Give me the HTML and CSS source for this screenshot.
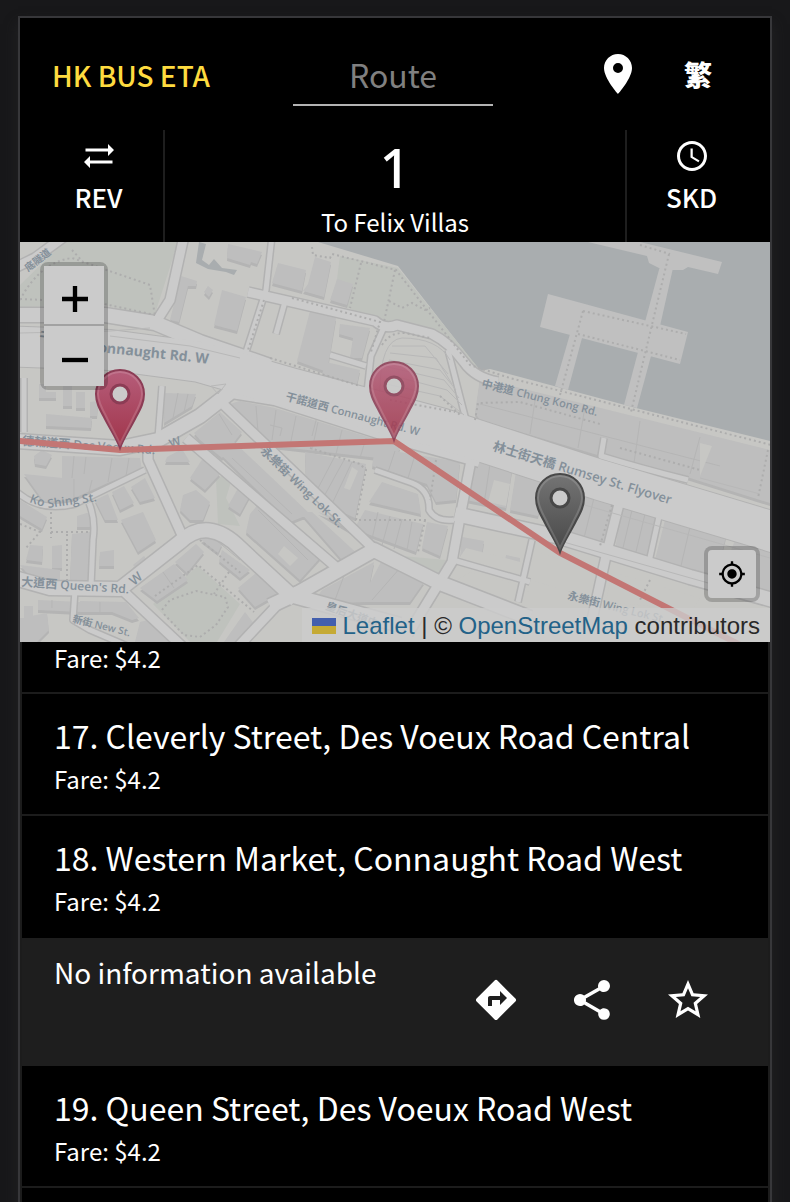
FILE: index.html
```html
<!DOCTYPE html>
<html lang="en">
<head>
<meta charset="utf-8">
<meta name="viewport" content="width=device-width, initial-scale=1">
<title>HK Bus ETA</title>
<link rel="stylesheet" href="styles.css">
</head>
<body>
<div class="app">
  <header class="topbar">
    <a class="brand" href="#">HK BUS ETA</a>
    <input class="search" type="text" placeholder="Route" aria-label="Route">
    <div class="tools">
      <button class="tool" type="button" aria-label="Nearby"><svg class="icon" viewBox="0 0 24 24"><path d="M12 2C8.130 2 5 5.130 5 9c0 5.250 7 13 7 13s7-7.750 7-13c0-3.870-3.130-7-7-7zm0 9.500a2.500 2.500 0 0 1 0-5 2.500 2.500 0 0 1 0 5z"/></svg></button>
      <button class="tool lang" type="button">繁</button>
    </div>
  </header>

  <section class="route">
    <button class="side" type="button"><svg class="icon-small" viewBox="0 0 24 24"><path d="m18 12 4-4-4-4v3H3v2h15zM6 12l-4 4 4 4v-3h15v-2H6z"/></svg>REV</button>
    <div class="summary"><h1 class="number">1</h1><p class="dest">To Felix Villas</p></div>
    <button class="side" type="button"><svg class="icon-small" viewBox="0 0 24 24"><path d="M11.990 2C6.470 2 2 6.480 2 12s4.470 10 9.990 10C17.520 22 22 17.520 22 12S17.520 2 11.990 2zM12 20c-4.420 0-8-3.580-8-8s3.580-8 8-8 8 3.580 8 8-3.580 8-8 8zM12.500 7H11v6l5.250 3.150.750-1.230-4.500-2.670z"/></svg>SKD</button>
  </section>

  <section class="map" aria-label="Map">
    <svg class="canvas" viewBox="20 242 750 400" preserveAspectRatio="xMidYMid slice">
      <defs>
        <path id="road-wide" d="M0 346L110 350 200 362 290 388 440 428 600 480 780 534"/>
        <path id="road-main" d="M0 315H105L155 323 200 342 270 366M0 440L120 448 158 440 200 416 232 391 275 398 400 438 480 460M0 574L50 588 120 589 180 542Q208 516 240 548L296 600M270 606L300 592 374 550 440 583 530 618M455 514L560 537 690 577 780 602M290 595L400 625"/>
        <path id="road-mid" d="M184 236L170 300 156 322M148 445V460L186 544M224 405L375 550M186 438L336 567M120 588L186 650M280 602L235 650M473 450L461 512 452 562 408 634M620 500L606 556 592 620M248 292L375 321Q385 330 397 325L432 334Q450 343 464 362 475 378 498 382M-10 280L35 258 65 236"/>
        <path id="road-small" d="M272 236L266 290 246 352M24 378V432M162 386L158 438M10 485Q35 514 75 504L145 470M89 503Q96 520 93 540L91 586M75 590L73 620 90 630 132 648M385 325L371 356 367 392M286 298L276 334M330 355L366 366M375 470L412 483Q430 490 429 510 436 522 454 520M453 560L530 582M604 438L601 456Q640 468 688 480M660 512L649 562M532 540L518 602M448 350L466 420"/>
        <path id="blocks" d="M228 244L262 252 257 264 251 262 250 265 227 258ZM181 276L197 281 196 286 188 286 179 322 170 320ZM222 290L246 297 237 331 214 325ZM204 292L208 286 213 290 209 297ZM278 263L306 270 302 291 272 283ZM315 257L331 262 324 297 303 291 308 284ZM337 279L353 284 347 305 330 300ZM310 311L336 318 327 372 297 361ZM340 324L370 328 362 358 350 358 353 338 339 334ZM326 362L360 370 357 384 322 374ZM39 384H56V398H39ZM63 386H72V406H63ZM76 392H85V408H76ZM90 402L98 401 97 416 90 416ZM46 414L92 418 91 428 46 426ZM165 393L196 394 192 406 164 423ZM194 433L220 412 242 432 222 458 200 440ZM230 404L240 401 275 408 400 447 396 460 272 446ZM62 456L140 458 142 470 110 482 62 480ZM24 474L62 478 82 475 110 482 70 500 44 502ZM34 456L42 450 52 455 46 466 35 464ZM95 500L108 494 118 520 105 520ZM112 492L124 486 134 503 120 510ZM131 487L145 478 155 498 140 502ZM121 520L143 512 156 540 138 552ZM100 552L114 550V566H99ZM72 534L90 532 88 581 70 581ZM77 516L90 512V527H77ZM20 500L47 517 42 529 20 516ZM30 545L43 546 42 562 26 560ZM52 546L62 545V568H52ZM20 565L60 570 60 580 30 577ZM133 565L144 556 150 565 138 571ZM167 457L182 449 190 462 165 462ZM205 455L220 474 205 490 190 478ZM183 495L196 490 210 502 203 520 190 520 180 510ZM237 490L245 484 253 490 240 514 228 506ZM216 450L232 440 310 514 290 522ZM250 514L262 500 320 558 300 580 246 532ZM140 588L174 564 188 580 157 601ZM175 562L196 544 204 552 187 573ZM201 540L212 534 222 544 218 553ZM222 550L250 570 240 578 219 561ZM238 588L263 567 285 590 255 607ZM38 600L80 602 80 612 38 610ZM80 601L126 602 139 618 132 620 112 612H80ZM24 606H33V618H24ZM20 618L47 613 49 630 37 642H20ZM140 622L152 619 170 642H135ZM224 642L245 612 255 625 244 642ZM305 452L366 464 355 518 331 507 306 482ZM375 448L460 462 456 500 436 502 427 484 372 466ZM382 482L418 494 421 514 369 502ZM365 510L423 524 416 552 354 529ZM427 522L448 526 440 556 422 548ZM318 512L330 516 404 556 396 562 374 545ZM300 512L312 512 362 558 342 560ZM322 590L374 562 366 602 312 604ZM382 560L424 582 410 602 360 602ZM462 537L484 541 480 566 460 561ZM476 460L512 470 506 508 466 500ZM516 472L546 480 538 516 510 510ZM506 555L520 558V572L504 568ZM572 492L613 503 604 544 546 530 560 510ZM622 508L658 518 648 559 615 550ZM665 520L726 536 716 578 655 560ZM735 540L770 550V600L722 575ZM568 576L592 580 590 594 568 588ZM480 378L770 450V503L690 478 604 457 480 420 475 413Z"/>
      </defs>
      <rect class="land" x="20" y="242" width="750" height="400"/>
      <path class="water" d="M318 242L398 266 480 371 490 369 640 409 770 441V242Z"/>
      <path class="green" d="M64 242H178L154 317 105 305 20 307V285ZM340 256L398 268 480 370 470 372 440 333 397 320 382 322 334 302ZM216 478L234 472 226 498 240 526 218 524ZM153 604L198 566 240 604 217 642H190ZM402 556L446 560 438 574Z"/>
      <path class="pier" d="M548 294L688 332 680 364 540 327Z M570 334L582 338 568 390 555 386Z M638 352L651 356 637 408 624 405Z M660 266L673 268 660 326 645 322Z M588 242H640L722 262 718 274 688 267 683 270 672 270 659 268 649 263 647 256Z"/>
      <use class="block-edge" href="#blocks" y="3"/>
      <use class="block" href="#blocks"/>
      <path class="facade" d="M178 393L173 418M188 394L184 412M219 414L232 435M74 456L72 478M86 457L84 474M112 458L108 482M129 458L126 476M74 479V500M92 480L88 496M216 540L240 560M163 572L174 588M52 600V608M100 602V612M335 456L316 492M344 460L322 500M352 462L331 506M378 512L372 539M390 516L382 545M402 519L394 549M412 522L407 550M395 451L388 472M415 455L408 478M258 510L308 560M232 458L292 514M256 406L258 432M276 410L272 440M296 416L290 446M318 422L312 450M342 430L336 454M366 438L360 458M270 425L282 428 280 436M580 496L566 532M594 498L584 538M632 510L622 552M645 514L635 556M690 527L680 570M536 394L530 434M585 407L578 448M640 421L634 463M700 437L690 474M480 404L720 466M345 573L335 600M400 568L372 600M320 405L312 436M490 464L484 504"/>
      <path class="court" d="M352 467L358 471 350 490 344 488ZM494 480L510 484 506 506 488 502ZM536 552L598 570 592 598 530 580ZM612 572L700 598 692 610 606 602ZM700 443L712 446 700 476ZM466 548L528 564 522 576 458 560ZM284 546L298 558 290 566 278 554ZM470 572L530 588 522 602 450 584ZM46 386H60V392H46Z"/>
      <path class="ship" d="M199 242L206 244 202 260 209 265 214 259 222 268 237 270 234 275 226 272 208 269 196 263Z"/>
      <g class="casing">
        <use class="w-small" href="#road-small"/><use class="w-mid" href="#road-mid"/><use class="w-main" href="#road-main"/><use class="w-wide" href="#road-wide"/>
      </g>
      <g class="road">
        <use class="w-small" href="#road-small"/><use class="w-mid" href="#road-mid"/><use class="w-main" href="#road-main"/><use class="w-wide" href="#road-wide"/>
      </g>
      <path class="lane" d="M20 333L110 331 150 328M110 336L190 346 240 358M392 346H425L448 374M390 353L436 358 452 384M389 360L440 370 456 390M388 367L444 380 459 398M390 375L447 390 462 405M386 384L440 396 464 415M380 392Q380 340 402 338 438 338 450 360M560 498L770 558M560 541L740 592M700 478L760 494M211 386L226 384 218 394Z"/>
      <path class="path" d="M20 300Q40 262 72 258L150 285 155 316M20 299L95 302 155 315M72 250L84 263M312 247L313 255 330 258 332 254 396 270 470 365 510 378 775 446M361 263L350 308M395 270L384 322M389 301L402 308 412 303 425 310 430 308M292 298L380 322 371 352M270 358L360 386M382 345Q390 332 405 333L430 338M264 300L248 350M583 311L686 334M578 334L680 360M583 311L560 395M669 254L631 412M640 245L670 254M390 400L455 412M440 396L460 415M475 420L478 403 520 402 600 424M310 448L360 464 366 470 356 520 428 520M436 460L430 500M425 520L418 552M155 596L198 565 254 612M229 572L214 594M162 610L170 600 196 591 225 597 228 607 216 625 200 637 184 635 162 612M51 512V538M51 532H90M67 534V580M20 524L40 532 26 548M200 540L242 574M612 505L600 546M620 448L700 470M768 450L758 498M650 580L640 600"/>
      <g class="labels">
        <text transform="translate(39 341) rotate(6)" font-size="13">干諾道</text>
        <text class="strong" transform="translate(98 352) rotate(6)" font-size="14">onnaught Rd. W</text>
        <text transform="translate(285 400) rotate(15)" font-size="11">干諾道西 Connaught Rd. W</text>
        <text transform="translate(481 387) rotate(14)" font-size="11">中港道 Chung Kong Rd.</text>
        <text transform="translate(492 450) rotate(17)" font-size="13">林士街天橋 Rumsey St. Flyover</text>
        <text transform="translate(22 445) rotate(4)" font-size="12">德輔道西 Des Voeux Rd.</text>
        <text transform="translate(171 448) rotate(-20)" font-size="12">W</text>
        <text transform="translate(260 452) rotate(44)" font-size="12">永樂街 Wing Lok St.</text>
        <text transform="translate(29 502) rotate(20)" font-size="12">Ko</text>
        <text transform="translate(48 508) rotate(-8)" font-size="12">Shing St.</text>
        <text transform="translate(21 586) rotate(4)" font-size="12">大道西 Queen's Rd.</text>
        <text transform="translate(134 586) rotate(-40)" font-size="13">W</text>
        <text transform="translate(72 622) rotate(14)" font-size="10">新街 New St.</text>
        <text transform="translate(28 272) rotate(-38)" font-size="10">底隧道</text>
        <text transform="translate(567 599) rotate(14)" font-size="11">永樂街 Wing Lok St.</text>
        <text transform="translate(325 609) rotate(20)" font-size="11">皇后大道中</text>
      </g>
      <path class="trace" d="M10 440L120 450 394 441 560 553 760 655"/>
      <defs>
        <linearGradient id="red" x2="0" y2="1"><stop class="red-top" offset="0"/><stop class="red-low" offset="1"/></linearGradient>
        <linearGradient id="gray" x2="0" y2="1"><stop class="gray-top" offset="0"/><stop class="gray-low" offset="1"/></linearGradient>
        <g id="pin">
          <path class="pin-body" d="M0-1C-3-10-10-20-16-32-21-41-24-47-24-55A24 24 0 0 1 24-55C24-47 21-41 16-32 10-20 3-10 0-1Z"/>
          <path class="pin-shine" d="M0-5C-5-16-10-24-14-33-19-42-22-48-22-55A22 22 0 0 1 22-55C22-48 19-42 14-33 10-24 5-16 0-5Z"/>
          <circle class="pin-hole" cy="-55" r="9"/>
        </g>
      </defs>
      <use class="pin-red" href="#pin" x="120" y="449"/>
      <use class="pin-red pin-faded" href="#pin" x="394" y="441"/>
      <use class="pin-gray" href="#pin" x="560" y="553"/>
    </svg>
    <div class="zoom">
      <button class="zoom-button" type="button" aria-label="Zoom in"><svg class="sign" viewBox="0 0 24 24"><path d="M0 10h10V0h4v10h10v4H14v10h-4V14H0z"/></svg></button>
      <button class="zoom-button" type="button" aria-label="Zoom out"><svg class="sign" viewBox="0 0 24 24"><path d="M0 10h24v4H0z"/></svg></button>
    </div>
    <button class="locate" type="button" aria-label="My location"><svg class="target" viewBox="0 0 24 24"><path d="M12 8c-2.210 0-4 1.790-4 4s1.790 4 4 4 4-1.790 4-4-1.790-4-4-4zm8.940 3A8.990 8.990 0 0 0 13 3.060V1h-2v2.060A8.990 8.990 0 0 0 3.060 11H1v2h2.060A8.990 8.990 0 0 0 11 20.940V23h2v-2.060A8.990 8.990 0 0 0 20.940 13H23v-2zM12 19c-3.870 0-7-3.130-7-7s3.130-7 7-7 7 3.130 7 7-3.130 7-7 7z"/></svg></button>
    <div class="credit"><a class="link" href="#"><svg class="flag" viewBox="0 0 24 16"><path class="flag-blue" d="M0 0h24v8H0z"/><path class="flag-gold" d="M0 8h24v8H0z"/></svg> Leaflet</a> | © <a class="link" href="#">OpenStreetMap</a> contributors</div>
  </section>

  <main class="stops">
    <article class="stop stop-cut"><p class="fare">Fare: $4.2</p></article>
    <article class="stop"><h2 class="name">17. Cleverly Street, Des Voeux Road Central</h2><p class="fare">Fare: $4.2</p></article>
    <article class="stop stop-open"><h2 class="name">18. Western Market, Connaught Road West</h2><p class="fare">Fare: $4.2</p></article>
    <section class="details">
      <p class="eta">No information available</p>
      <div class="actions">
        <button class="action" type="button" aria-label="Directions"><svg class="icon" viewBox="0 0 24 24"><path d="m21.710 11.290-9-9a.996.996 0 0 0-1.410 0l-9 9a.996.996 0 0 0 0 1.410l9 9c.390.390 1.020.390 1.410 0l9-9a.996.996 0 0 0 0-1.410zM14 14.500V12h-4v3H8v-4c0-.550.450-1 1-1h5V7.500l3.500 3.500z"/></svg></button>
        <button class="action" type="button" aria-label="Share"><svg class="icon" viewBox="0 0 24 24"><path d="M18 16.080c-.760 0-1.440.300-1.960.770L8.910 12.700c.050-.230.090-.460.090-.700s-.040-.470-.090-.700l7.050-4.110c.540.500 1.250.810 2.040.810a3 3 0 1 0-3-3c0 .240.040.470.090.700L8.040 9.810A3 3 0 1 0 6 15c.790 0 1.500-.310 2.040-.810l7.120 4.160c-.050.210-.080.430-.080.650a2.920 2.920 0 1 0 2.920-2.920z"/></svg></button>
        <button class="action" type="button" aria-label="Add to favourites"><svg class="icon" viewBox="0 0 24 24"><path d="m22 9.240-7.190-.620L12 2 9.190 8.630 2 9.240l5.460 4.730L5.820 21 12 17.270 18.180 21l-1.630-7.030zM12 15.400l-3.760 2.270 1-4.280-3.320-2.880 4.380-.380L12 6.100l1.710 4.040 4.380.380-3.320 2.880 1 4.280z"/></svg></button>
      </div>
    </section>
    <article class="stop"><h2 class="name">19. Queen Street, Des Voeux Road West</h2><p class="fare">Fare: $4.2</p></article>
  </main>
</div>
</body>
</html>
```

FILE: styles.css
```css
* { box-sizing: border-box; }
body {
  margin: 0;
  height: 100vh;
  padding: 16px 18px 0;
  overflow: hidden;
  background: #18181a;
  color: #fff;
  font-family: "Noto Sans CJK TC", "Noto Sans", sans-serif;
}
h1, h2, p { margin: 0; font-weight: 400; }
button { border: 0; padding: 0; background: none; color: inherit; font: inherit; cursor: pointer; }
svg { display: block; fill: currentColor; }

.app {
  display: flex;
  flex-direction: column;
  height: 100%;
  border: 2px solid #37373a;
  border-bottom: 0;
  background: #000;
  box-shadow: 0 8px 12px #222224;
}
.icon { width: 48px; height: 48px; }
.icon-small { width: 36px; height: 36px; }

.topbar {
  display: grid;
  grid-template-columns: 1fr 200px 1fr;
  align-items: center;
  flex: none;
  height: 112px;
  padding: 0 32px 0 28px;
}
.brand { padding: 2px 0 0 4px; color: #fedb3f; font-size: 28px; font-weight: 500; text-decoration: none; white-space: nowrap; }
.search {
  width: 100%;
  height: 64px;
  border: 0;
  border-bottom: 2px solid #b3b3b3;
  padding: 2px 0 0;
  background: none;
  color: #fff;
  font: inherit;
  font-size: 32px;
  text-align: center;
}
.search::placeholder { color: #808080; opacity: 1; }
.tools { display: flex; justify-content: flex-end; }
.tool { display: grid; place-items: center; width: 80px; height: 64px; }
.lang { font-size: 28px; font-weight: 900; }

.route { display: flex; flex: none; height: 112px; }
.side {
  display: flex;
  flex-direction: column;
  align-items: center;
  gap: 4px;
  width: 145px;
  padding-top: 8px;
  font-size: 26px;
  font-weight: 500;
}
.side:first-child { border-right: 2px solid #1e1e1e; padding-left: 14px; }
.side:last-child { border-left: 2px solid #1e1e1e; padding-right: 14px; }
.summary { flex: 1; text-align: center; }
.number { font-family: "Noto Sans", sans-serif; font-size: 54px; font-weight: 500; line-height: 74px; }
.dest { font-size: 24px; line-height: 36px; }

.map { position: relative; flex: none; height: 400px; overflow: hidden; background: #c7c7c5; }
.canvas { width: 100%; height: 100%; }
.land { fill: #c7c7c4; }
.water { fill: #a9adaf; }
.green { fill: #bfc2bd; }
.pier { fill: #c0c0c0; }
.block { fill: #bebebe; }
.block-edge { fill: #b4b4b4; }
.court { fill: #c7c7c4; }
.ship { fill: #a9adaf; }
.facade { fill: none; stroke: #b5b5b5; }
.casing, .road { fill: none; stroke-linejoin: round; }
.casing { stroke: #b2b2b2; }
.road { stroke: #cbcbcb; }
.casing .w-small { stroke-width: 8px; }
.casing .w-mid { stroke-width: 12px; }
.casing .w-main { stroke-width: 17px; }
.casing .w-wide { stroke-width: 42px; }
.road .w-small { stroke-width: 5px; }
.road .w-mid { stroke-width: 9px; }
.road .w-main { stroke-width: 14px; }
.road .w-wide { stroke-width: 40px; }
.lane { fill: none; stroke: #b8b8b8; }
.path { fill: none; stroke: #adadad; stroke-width: 2px; stroke-dasharray: 2px 3px; }
.labels { fill: #84909a; font-family: "Open Sans", "Noto Sans CJK TC", sans-serif; font-weight: 600; }
.strong { font-weight: 700; }
.trace { fill: none; stroke: #c37674; stroke-width: 6px; }
.red-top { stop-color: #b65d7a; }
.red-low { stop-color: #a0344a; }
.gray-top { stop-color: #747474; }
.gray-low { stop-color: #484848; }
.pin-red { fill: url(#red); stroke: #8c3c55; }
.pin-faded { opacity: .85; }
.pin-gray { fill: url(#gray); stroke: #484848; }
.pin-body { stroke-width: 2px; }
.pin-shine { fill: none; stroke: #fff; stroke-opacity: .15; stroke-width: 2px; }
.pin-hole { fill: #cbcbcb; stroke-width: 3px; }

.zoom, .locate { position: absolute; border: 4px solid rgba(0, 0, 0, .2); border-radius: 8px; background-clip: padding-box; color: #000; }
.zoom { top: 20px; left: 20px; display: grid; width: 68px; }
.zoom-button { display: grid; place-items: center; height: 60px; padding: 8px 0 0 2px; background: #cbcbcb; }
.zoom-button:first-child { border-bottom: 2px solid #a2a2a2; }
.sign { width: 26px; height: 26px; }
.locate { right: 10px; bottom: 40px; display: grid; place-items: center; width: 56px; height: 56px; background-color: #cbcbcb; }
.target { width: 28px; height: 28px; }
.credit {
  position: absolute;
  right: 0;
  bottom: 0;
  padding: 2px 10px 0;
  background: rgba(204, 204, 204, .8);
  color: #292929;
  font: 24px/32px "Liberation Sans", Arial, sans-serif;
  white-space: nowrap;
}
.link { color: #236288; text-decoration: none; }
.flag { display: inline; width: 24px; height: 16px; }
.flag-blue { fill: #435fad; }
.flag-gold { fill: #c5aa35; }

.stops { flex: 1; min-height: 0; overflow: hidden; border: solid #1c1c1c; border-width: 0 2px; }
.stop { border-bottom: 2px solid #1c1c1c; padding: 19px 32px 13px; }
.stop-cut { padding-top: 0; padding-bottom: 18px; }
.stop-cut .fare { line-height: 32px; }
.stop-open { border-bottom-color: #000; }
.name { font-size: 32px; line-height: 44px; white-space: nowrap; }
.fare { font-size: 24px; line-height: 44px; }
.details { display: flex; justify-content: space-between; height: 128px; padding: 14px 32px; background: #1e1e1e; }
.eta { font-size: 28px; line-height: 40px; }
.actions { display: flex; height: 96px; align-items: center; }
.action { display: grid; place-items: center; width: 96px; height: 96px; }
```
